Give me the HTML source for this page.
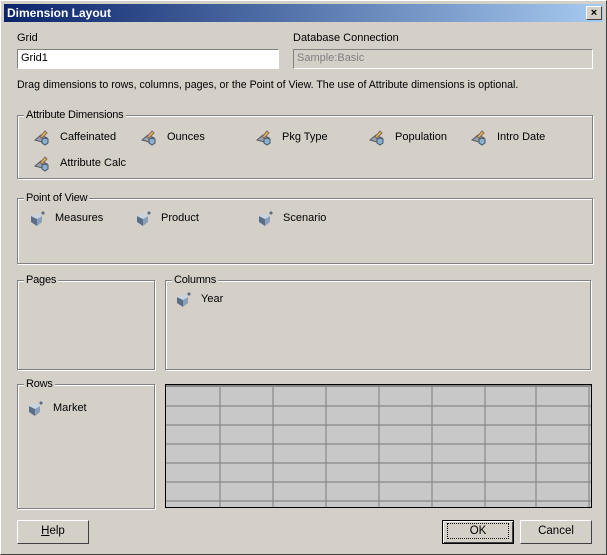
<!DOCTYPE html><html><head><style>
body{margin:0;width:607px;height:555px;overflow:hidden;font-family:"Liberation Sans",sans-serif;font-size:11px;color:#000}
.win{position:absolute;left:0;top:0;width:605px;height:553px;background:#d4d0c8;border:1px solid;border-color:#fff #404040 #404040 #fff}
.title{position:absolute;left:3px;top:3px;width:599px;height:18px;background:linear-gradient(90deg,#0a246a,#a6caf0);color:#fff;font-weight:bold;font-size:12px;line-height:18px;padding-left:3px;box-sizing:border-box}
.x{position:absolute;right:4px;top:5px;width:16px;height:14px;background:#d4d0c8;border:1px solid;border-color:#fff #404040 #404040 #fff;box-sizing:border-box;text-align:center;font-size:11px;line-height:12px;color:#000;font-weight:bold}
.a{position:absolute;white-space:nowrap}
.inp{position:absolute;box-sizing:border-box;border:1px solid;border-color:#808080 #fff #fff #808080;background:#fff;padding:2px 3px;font-size:11px}
.grp{position:absolute;box-sizing:border-box;border:1px solid #808080;box-shadow:1px 1px 0 #fff,inset 1px 1px 0 #fff}
.grp span{position:absolute;top:-7px;left:6px;background:#d4d0c8;padding:0 2px;letter-spacing:-0.2px}
.it{position:absolute;white-space:nowrap;padding-left:26px;line-height:16px}
.it svg{position:absolute;left:0;top:0}
.btn{position:absolute;box-sizing:border-box;height:24px;border:1px solid;border-color:#fff #404040 #404040 #fff;background:#d4d0c8;text-align:center;line-height:21px;font-size:11.5px}
</style></head><body><div class="win">
<div class="title">Dimension Layout</div><div class="x">×</div>
<div class="a" style="left:16px;top:31px;font-size:11px">Grid</div>
<div class="inp" style="left:16px;top:48px;width:262px;height:20px">Grid1</div>
<div class="a" style="left:292px;top:31px;font-size:11px">Database Connection</div>
<div class="inp" style="left:292px;top:48px;width:300px;height:20px;background:#d4d0c8;color:#808080">Sample:Basic</div>
<div class="a" style="left:16px;top:78px;font-size:10.6px">Drag dimensions to rows, columns, pages, or the Point of View. The use of Attribute dimensions is optional.</div>

<div class="grp" style="left:16px;top:114px;width:576px;height:64px"><span>Attribute Dimensions</span></div>
<div class="grp" style="left:16px;top:197px;width:576px;height:66px"><span>Point of View</span></div>
<div class="grp" style="left:16px;top:279px;width:138px;height:90px"><span>Pages</span></div>
<div class="grp" style="left:164px;top:279px;width:426px;height:90px"><span>Columns</span></div>
<div class="grp" style="left:16px;top:383px;width:138px;height:125px"><span>Rows</span></div>

<svg width="0" height="0" style="position:absolute"><defs>
<g id="at"><path d="M1 11 L7 6 L13 9 L8 13Z" fill="#9aa2aa" stroke="#556"/><path d="M6 8 L11 2 L13 4 L8 9Z" fill="#e0c040" stroke="#866"/><path d="M11 9 L14 10 L14 14 L11 16 L8 14 L8 10Z" fill="#8ab0d0" stroke="#456"/></g>
<g id="dm"><path d="M2 6 L8 9 L8 16 L2 12Z" fill="#5a6e88"/><path d="M8 9 L13 6 L13 12 L8 16Z" fill="#8aa0b8"/><path d="M2 6 L7 3 L13 6 L8 9Z" fill="#c8d4e0"/><path d="M14 1 L16 3 L14 5 L12 3Z" fill="#5a6e88"/></g>
</defs></svg>

<div class="it" style="left:33px;top:128px">Caffeinated<svg width="18" height="17"><use href="#at"/></svg></div>
<div class="it" style="left:140px;top:128px">Ounces<svg width="18" height="17"><use href="#at"/></svg></div>
<div class="it" style="left:255px;top:128px">Pkg Type<svg width="18" height="17"><use href="#at"/></svg></div>
<div class="it" style="left:368px;top:128px">Population<svg width="18" height="17"><use href="#at"/></svg></div>
<div class="it" style="left:470px;top:128px">Intro Date<svg width="18" height="17"><use href="#at"/></svg></div>
<div class="it" style="left:33px;top:154px">Attribute Calc<svg width="18" height="17"><use href="#at"/></svg></div>

<div class="it" style="left:28px;top:209px">Measures<svg width="18" height="17"><use href="#dm"/></svg></div>
<div class="it" style="left:134px;top:209px">Product<svg width="18" height="17"><use href="#dm"/></svg></div>
<div class="it" style="left:256px;top:209px">Scenario<svg width="18" height="17"><use href="#dm"/></svg></div>
<div class="it" style="left:174px;top:290px">Year<svg width="18" height="17"><use href="#dm"/></svg></div>
<div class="it" style="left:26px;top:399px">Market<svg width="18" height="17"><use href="#dm"/></svg></div>

<svg class="a" style="left:164px;top:383px" width="427" height="125">
<rect x="0.5" y="0.5" width="426" height="123" fill="#c8c8c8" stroke="#000"/>
<g stroke="#888" stroke-width="1.2">
<line x1="1" y1="2" x2="426" y2="2" stroke-width="2"/>
<line x1="1" y1="22" x2="426" y2="22"/><line x1="1" y1="41" x2="426" y2="41"/><line x1="1" y1="60" x2="426" y2="60"/><line x1="1" y1="79" x2="426" y2="79"/><line x1="1" y1="98" x2="426" y2="98"/><line x1="1" y1="117" x2="426" y2="117"/>
<line x1="55" y1="1" x2="55" y2="123"/><line x1="108" y1="1" x2="108" y2="123"/><line x1="161" y1="1" x2="161" y2="123"/><line x1="214" y1="1" x2="214" y2="123"/><line x1="267" y1="1" x2="267" y2="123"/><line x1="320" y1="1" x2="320" y2="123"/><line x1="371" y1="1" x2="371" y2="123"/><line x1="424" y1="1" x2="424" y2="123"/>
</g></svg>

<div class="btn" style="left:16px;top:519px;width:72px"><u>H</u>elp</div>
<div class="btn" style="left:441px;top:519px;width:72px;border:1px solid #000;box-shadow:inset 1px 1px 0 #fff,inset -1px -1px 0 #404040"><span style="border:1px dotted #000;padding:1px 22px">OK</span></div>
<div class="btn" style="left:519px;top:519px;width:72px">Cancel</div>
</div></body></html>
